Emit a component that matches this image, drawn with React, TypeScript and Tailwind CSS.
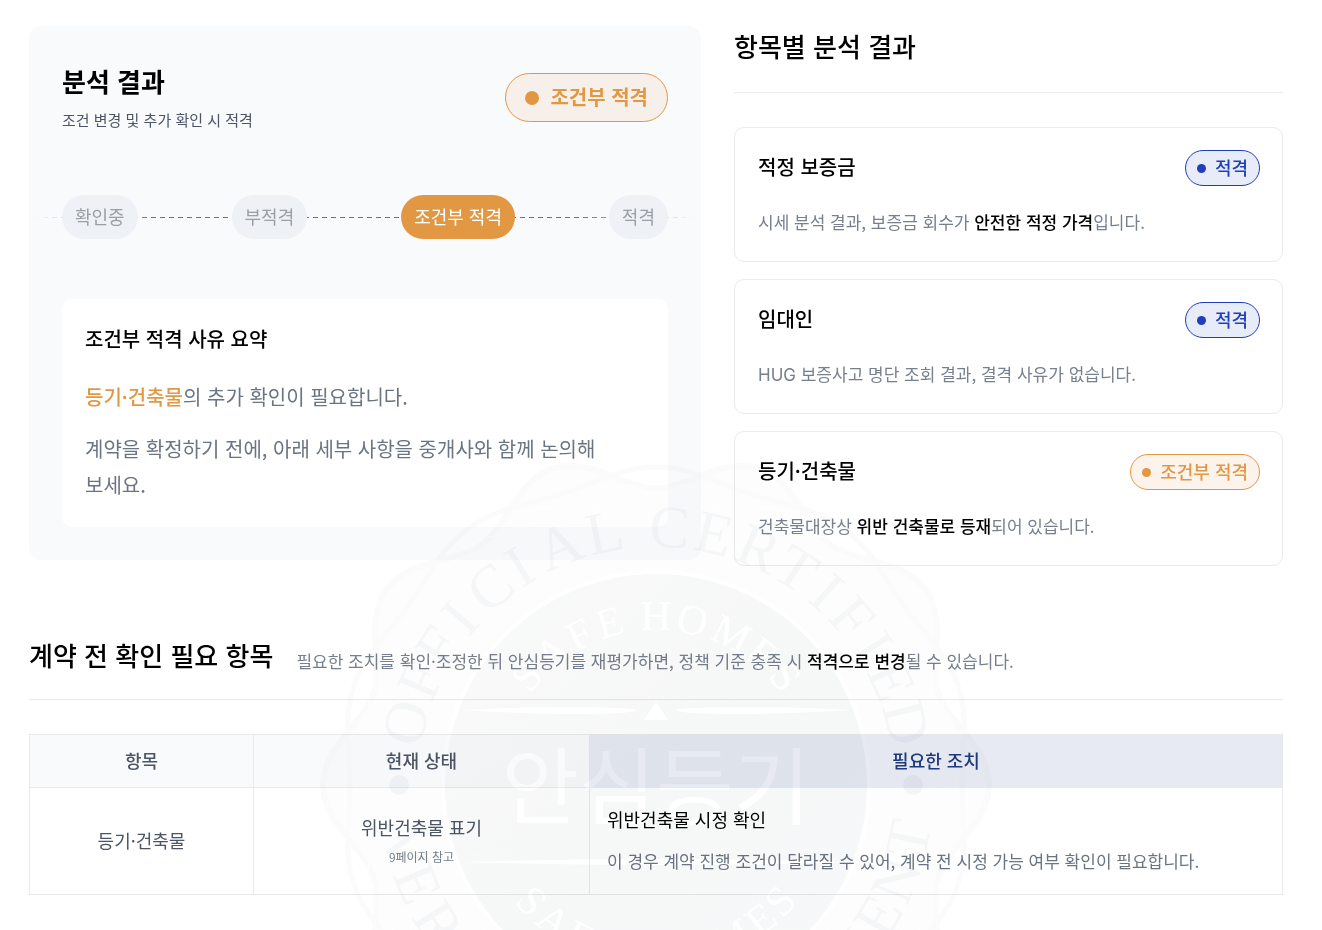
import React from 'react';

type Tone = 'ok' | 'conditional';

const BADGE_TONE: Record<Tone, { box: string; dot: string }> = {
  ok: { box: 'border-[#1f3fbb] bg-[#e8ebf8] text-[#1f3fbb]', dot: 'bg-[#1f3fbb]' },
  conditional: { box: 'border-[#e29843] bg-[#fcf3ec] text-[#e29843]', dot: 'bg-[#e29843]' },
};

function Badge({ tone, children }: { tone: Tone; children: React.ReactNode }) {
  const style = BADGE_TONE[tone];
  return (
    <span className={`flex h-9 shrink-0 items-center gap-[9px] rounded-full border px-[11px] text-lg leading-6 font-medium ${style.box}`}>
      <span className={`size-[9px] rounded-full ${style.dot}`} />
      <span className="pb-0.5">{children}</span>
    </span>
  );
}

const STEPS = ['확인중', '부적격', '조건부 적격', '적격'];
const CURRENT_STEP = '조건부 적격';

function Steps() {
  return (
    <div className="relative mt-[61px]">
      <div
        aria-hidden="true"
        className="absolute -inset-x-7 top-[22px] h-px bg-[repeating-linear-gradient(90deg,#6b7280_0_5px,transparent_5px_9px)] [mask-image:linear-gradient(90deg,transparent,rgba(0,0,0,0.3)_6%,black_18%,black_82%,rgba(0,0,0,0.3)_94%,transparent)]"
      />
      <ol className="relative flex justify-between">
        {STEPS.map((step) => (
          <li
            key={step}
            aria-current={step === CURRENT_STEP ? 'step' : undefined}
            className={`flex h-11 items-center rounded-full px-[13px] pb-0.5 text-lg ${
              step === CURRENT_STEP ? 'bg-[#e29843] text-white' : 'bg-[#eef1f6] text-[#9b9fa6]'
            }`}
          >
            {step}
          </li>
        ))}
      </ol>
    </div>
  );
}

function ResultCard() {
  return (
    <section className="rounded-xl bg-[#f9fafc] px-[33px] pt-[35px] pb-[33px]">
      <header className="flex items-center justify-between">
        <div>
          <h2 className="text-[26px] leading-10 font-bold text-black">분석 결과</h2>
          <p className="mt-[5px] text-[15px] leading-7 text-[#4b5565]">조건 변경 및 추가 확인 시 적격</p>
        </div>
        <span className="flex h-[49px] items-center gap-[11px] rounded-full border border-[#e29843] bg-[#f7f0ea] px-[19px] text-xl font-bold text-[#e29843]">
          <span className="size-3.5 rounded-full bg-[#e29843]" />
          <span className="pb-0.5">조건부 적격</span>
        </span>
      </header>
      <Steps />
      <div className="mt-[60px] rounded-[10px] bg-white px-[23px] pt-[22px] pb-6 text-xl leading-9 text-[#6b7482]">
        <h3 className="font-medium text-black">조건부 적격 사유 요약</h3>
        <p className="mt-[22px]">
          <strong className="font-medium text-[#e29843]">등기·건축물</strong>의 추가 확인이 필요합니다.
        </p>
        <p className="mt-4">계약을 확정하기 전에, 아래 세부 사항을 중개사와 함께 논의해 보세요.</p>
      </div>
    </section>
  );
}

function ItemCard({ title, tone, status, children }: { title: string; tone: Tone; status: string; children: React.ReactNode }) {
  return (
    <article className="rounded-[10px] border border-[#ebebed] px-[23px] py-[22px] pr-[22px]">
      <div className="flex items-center justify-between">
        <h3 className="pb-0.5 text-xl leading-8 font-medium text-black">{title}</h3>
        <Badge tone={tone}>{status}</Badge>
      </div>
      <p className="mt-5 pb-px text-[17px] leading-8 text-[#78808d]">{children}</p>
    </article>
  );
}

function Em({ children }: { children: React.ReactNode }) {
  return <strong className="font-medium text-black">{children}</strong>;
}

function ItemResults() {
  return (
    <section>
      <h2 className="border-b border-[#ebebed] pb-[26px] text-[26px] leading-10 font-medium text-black">항목별 분석 결과</h2>
      <div className="mt-[34px] flex flex-col gap-[17px]">
        <ItemCard title="적정 보증금" tone="ok" status="적격">
          시세 분석 결과, 보증금 회수가 <Em>안전한 적정 가격</Em>입니다.
        </ItemCard>
        <ItemCard title="임대인" tone="ok" status="적격">
          <span className="font-[Inter] leading-none">HUG</span> 보증사고 명단 조회 결과, 결격 사유가 없습니다.
        </ItemCard>
        <ItemCard title="등기·건축물" tone="conditional" status="조건부 적격">
          건축물대장상 <Em>위반 건축물로 등재</Em>되어 있습니다.
        </ItemCard>
      </div>
    </section>
  );
}

function ActionItems() {
  return (
    <section className="mt-[69px]">
      <header className="flex items-end gap-[23px] border-b border-[#e8e9eb] pb-6">
        <h2 className="shrink-0 text-[26px] leading-10 font-medium text-black">계약 전 확인 필요 항목</h2>
        <p className="text-[17px] leading-7 text-[#78808d]">
          필요한 조치를 확인·조정한 뒤 안심등기를 재평가하면, 정책 기준 충족 시 <Em>적격으로 변경</Em>될 수 있습니다.
        </p>
      </header>
      <table className="mt-[34px] w-full table-fixed border-collapse text-lg leading-7 text-[#4b5565] [&_td]:border [&_td]:border-[#e8e9eb] [&_th]:border [&_th]:border-[#e8e9eb]">
        <colgroup>
          <col className="w-56" />
          <col className="w-84" />
          <col />
        </colgroup>
        <thead>
          <tr className="h-[53px]">
            <th scope="col" className="bg-[#f9fafc] pb-0.5 font-medium">항목</th>
            <th scope="col" className="bg-[#f9fafc] pb-0.5 font-medium">현재 상태</th>
            <th scope="col" className="bg-[#e7eaf3] pb-0.5 font-medium text-[#1e3a7b]">필요한 조치</th>
          </tr>
        </thead>
        <tbody>
          <tr className="h-[107px]">
            <td className="pb-0.5 text-center">등기·건축물</td>
            <td className="text-center">
              <p>위반건축물 표기</p>
              <p className="mt-1 text-xs leading-6 text-[#78808d]">9페이지 참고</p>
            </td>
            <td className="px-[17px] pb-0.5">
              <p className="text-black">위반건축물 시정 확인</p>
              <p className="mt-3.5 text-[17px] text-[#6b7482]">이 경우 계약 진행 조건이 달라질 수 있어, 계약 전 시정 가능 여부 확인이 필요합니다.</p>
            </td>
          </tr>
        </tbody>
      </table>
    </section>
  );
}

type Glyph = [string, number];

const OUTER_TOP: Glyph[] = [
  ['O', -76], ['F', -66], ['F', -57.5], ['I', -49.5], ['C', -40], ['I', -32], ['A', -22], ['L', -11.5],
  ['C', 3], ['E', 13], ['R', 23.5], ['T', 33], ['I', 41.5], ['F', 49.5], ['I', 57.5], ['E', 66], ['D', 76],
];
const OUTER_BOTTOM: Glyph[] = [
  ['V', 76], ['E', 67.5], ['R', 57.5], ['M', -48], ['E', -59.5], ['N', -68.5], ['T', -78],
];
const INNER_TOP: Glyph[] = [
  ['S', -50], ['A', -38], ['F', -27], ['E', -16], ['H', 0], ['O', 12.5], ['M', 26.5], ['E', 39], ['S', 50],
];
const INNER_BOTTOM: Glyph[] = [
  ['S', 47], ['A', 37], ['F', 27], ['M', -26], ['E', -38], ['S', -47],
];

function Ring({ glyphs, y, size, fill }: { glyphs: Glyph[]; y: number; size: number; fill: string }) {
  return (
    <g fontFamily="'Liberation Serif', serif" fontSize={size} fill={fill} textAnchor="middle">
      {glyphs.map(([char, angle], i) => (
        <text key={i} y={y} transform={`rotate(${angle})`}>{char}</text>
      ))}
    </g>
  );
}

function rosette(base: number, amp: number, lobes: number, phase: number) {
  const points: string[] = [];
  for (let deg = 0; deg < 360; deg += 2) {
    const a = (deg * Math.PI) / 180;
    const r = base + amp * Math.cos(lobes * (a - (phase * Math.PI) / 180));
    points.push(`${(r * Math.sin(a)).toFixed(1)} ${(-r * Math.cos(a)).toFixed(1)}`);
  }
  return `M${points.join('L')}Z`;
}

const WEB = [0, 6, 12, 18, 24, 30];

function Seal() {
  return (
    <svg
      aria-hidden="true"
      viewBox="-340 -340 680 680"
      className="pointer-events-none absolute top-[419px] left-1/2 size-[680px] -translate-x-1/2 mix-blend-multiply"
    >
      <defs>
        <linearGradient id="seal-disc" x1="0" y1="0" x2="1" y2="1">
          <stop offset="0" stopColor="#fafafa" />
          <stop offset="0.5" stopColor="#f6f7f7" />
          <stop offset="1" stopColor="#f7f8f9" />
        </linearGradient>
      </defs>
      <path d={rosette(315, 18, 10, 18)} fill="#fdfdfd" stroke="#fbfbfb" strokeWidth="6" />
      <path d={rosette(312, 6, 10, 0)} fill="none" stroke="#fbfbfb" strokeWidth="5" />
      <g fill="none" stroke="#fff" strokeWidth="1">
        {WEB.map((p) => (
          <path key={p} d={rosette(262, 40, 10, p)} />
        ))}
      </g>
      <Ring glyphs={OUTER_TOP} y={-238} size={60} fill="#f5f6f7" />
      <Ring glyphs={OUTER_BOTTOM} y={278} size={60} fill="#f5f6f7" />
      <circle cx="-257" cy="0" r="10" fill="#f4f5f6" />
      <circle cx="257" cy="0" r="10" fill="#f4f5f6" />
      <circle r="213" fill="url(#seal-disc)" stroke="#fff" strokeWidth="4" />
      <g fill="none" stroke="#f9f9f9" strokeWidth="1">
        <path d="M-190 -60Q-80 -85 60 -170M-200 -20Q-20 -40 160 -120M-205 30Q0 20 195 -60M-200 70Q20 70 205 0M-180 110Q40 110 200 50M-150 150Q40 140 185 95" />
      </g>
      <Ring glyphs={INNER_TOP} y={-155} size={42} fill="#fff" />
      <Ring glyphs={INNER_BOTTOM} y={184} size={42} fill="#fff" />
      <g fill="#fff">
        <path d="M0 -83L12 -65H-12Z" />
        <path d="M-195 -75Q-100 -80 -35 -77Q-5 -75 -35 -72Q-100 -69 -195 -75Z" />
        <path d="M195 -75Q100 -80 35 -77Q5 -75 35 -72Q100 -69 195 -75Z" />
        <path d="M-195 77Q0 71 195 77Q0 83 -195 77Z" />
      </g>
      <text y="33" textAnchor="middle" fontFamily="'Noto Sans CJK KR', sans-serif" fontSize="84" fill="#fff">
        안심등기
      </text>
    </svg>
  );
}

export default function App() {
  return (
    <main
      lang="ko"
      className="isolate min-h-screen overflow-hidden bg-white pt-[26px] pr-[39px] pb-[35px] pl-[29px] font-['Noto_Sans_CJK_KR',sans-serif] break-keep"
    >
      <div className="relative">
        <div className="grid grid-cols-[672fr_549fr] items-start gap-x-[33px]">
          <ResultCard />
          <ItemResults />
        </div>
        <ActionItems />
        <Seal />
      </div>
    </main>
  );
}
